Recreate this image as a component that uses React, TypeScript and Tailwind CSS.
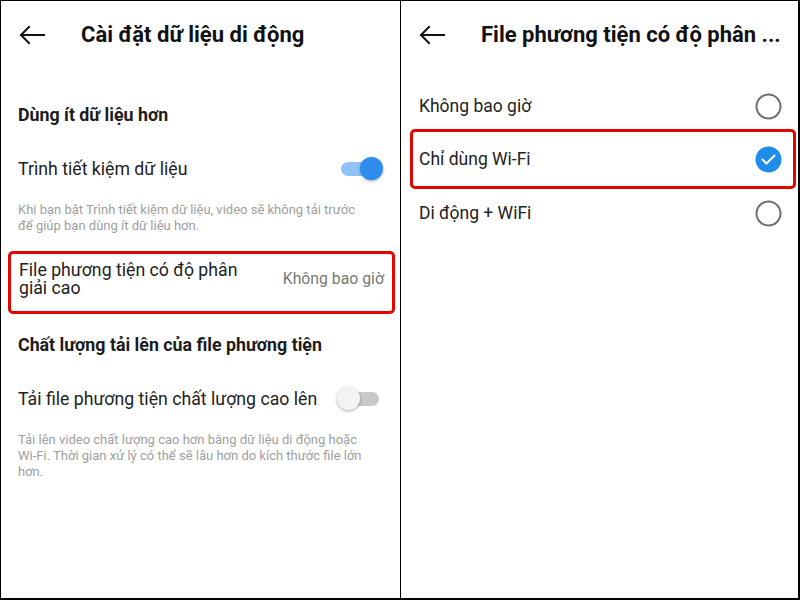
import React from 'react';

const BackArrow: React.FC = () => (
  <svg width="26" height="20" viewBox="0 0 26 20" fill="none" className="shrink-0">
    <path d="M25 10H2M10 2L2 10L10 18" stroke="#111" strokeWidth="2" strokeLinecap="square" />
  </svg>
);

const Toggle: React.FC<{ on: boolean }> = ({ on }) => (
  <div className="relative w-[44px] h-[24px] shrink-0">
    <div
      className={
        on
          ? 'absolute left-[4px] top-[5px] w-[38px] h-[14px] rounded-full bg-[#90c4f6]'
          : 'absolute left-[9px] top-[5px] w-[33px] h-[14px] rounded-full bg-[#c9c9c9]'
      }
    />
    <div
      className={
        on
          ? 'absolute left-[23px] top-0 w-[23px] h-[23px] rounded-full bg-[#2d8cec] shadow-[0_1px_3px_rgba(0,0,0,0.35)]'
          : 'absolute left-0 top-0 w-[23px] h-[23px] rounded-full bg-[#f3f3f3] shadow-[0_1px_3px_rgba(0,0,0,0.35)]'
      }
    />
  </div>
);

const Radio: React.FC<{ checked?: boolean }> = ({ checked }) =>
  checked ? (
    <svg width="27" height="27" viewBox="0 0 27 27" className="shrink-0">
      <circle cx="13.5" cy="13.5" r="13" fill="#1e8ce8" />
      <path d="M7.5 13.5L11.5 17.5L19.5 9.5" stroke="#fff" strokeWidth="2" fill="none" strokeLinecap="round" strokeLinejoin="round" />
    </svg>
  ) : (
    <svg width="27" height="27" viewBox="0 0 27 27" className="shrink-0">
      <circle cx="13.5" cy="13.5" r="12" fill="none" stroke="#6f6f6f" strokeWidth="2" />
    </svg>
  );

const Header: React.FC<{ title: string }> = ({ title }) => (
  <div className="h-[68px] flex items-center pl-[18px]">
    <BackArrow />
    <div className="ml-[36px] text-[22px] font-bold leading-[28px] text-[#111] whitespace-nowrap">{title}</div>
  </div>
);

export default function App() {
  const font = { fontFamily: 'Roboto, "Noto Sans", sans-serif' };
  return (
    <div
      className="w-[800px] h-[600px] bg-white flex border-t border-l border-r-2 border-b-2 border-black overflow-hidden"
      style={font}
    >
      {/* left screen */}
      <div className="w-[400px] h-full border-r border-black flex flex-col">
        <Header title="Cài đặt dữ liệu di động" />

        <div className="mt-[34px] pl-[17px] text-[17.8px] font-bold leading-[24px] text-[#1c1c1c]">Dùng ít dữ liệu hơn</div>

        <div className="mt-[30px] pl-[17px] pr-[19px] flex items-center justify-between">
          <span className="text-[17.7px] leading-[24px] text-[#222]">Trình tiết kiệm dữ liệu</span>
          <Toggle on />
        </div>

        <p className="mt-[21px] pl-[17px] pr-[31px] text-[13px] leading-[16px] text-[#a0a0a0]">
          Khi bạn bật Trình tiết kiệm dữ liệu, video sẽ không tải trước để giúp bạn dùng ít dữ liệu hơn.
        </p>

        <div className="mt-[17px] ml-[7px] w-[387px] h-[63px] border-[3px] border-[#e10600] rounded-[5px] flex items-start justify-between pl-[8px] pr-[8px] pt-[7px]">
          <span className="w-[240px] text-[17.7px] leading-[18px] text-[#222]">File phương tiện có độ phân giải cao</span>
          <span className="mt-[9px] text-[15.8px] leading-[18px] text-[#777]">Không bao giờ</span>
        </div>

        <div className="mt-[19px] pl-[17px] text-[17.8px] font-bold leading-[24px] text-[#1c1c1c]">
          Chất lượng tải lên của file phương tiện
        </div>

        <div className="mt-[30px] pl-[17px] pr-[19px] flex items-center justify-between">
          <span className="text-[17.7px] leading-[24px] text-[#222]">Tải file phương tiện chất lượng cao lên</span>
          <Toggle on={false} />
        </div>

        <p className="mt-[21px] pl-[17px] pr-[31px] text-[13px] leading-[16px] text-[#a0a0a0]">
          Tải lên video chất lượng cao hơn bằng dữ liệu di động hoặc Wi-Fi. Thời gian xử lý có thể sẽ lâu hơn do kích thước file lớn hơn.
        </p>
      </div>

      {/* right screen */}
      <div className="flex-1 h-full flex flex-col">
        <Header title="File phương tiện có độ phân ..." />

        <div className="mt-[14px] h-[46px] pl-[18px] pr-[16px] flex items-center justify-between">
          <span className="text-[17.5px] leading-[24px] text-[#222]">Không bao giờ</span>
          <Radio />
        </div>

        <div className="ml-[9px] w-[386px] h-[60px] border-[3px] border-[#e10600] rounded-[5px] flex items-center justify-between pl-[6px] pr-[11px]">
          <span className="text-[17.5px] leading-[24px] text-[#222]">Chỉ dùng Wi-Fi</span>
          <Radio checked />
        </div>

        <div className="h-[48px] pl-[18px] pr-[16px] flex items-center justify-between">
          <span className="text-[17.5px] leading-[24px] text-[#222]">Di động + WiFi</span>
          <Radio />
        </div>
      </div>
    </div>
  );
}
